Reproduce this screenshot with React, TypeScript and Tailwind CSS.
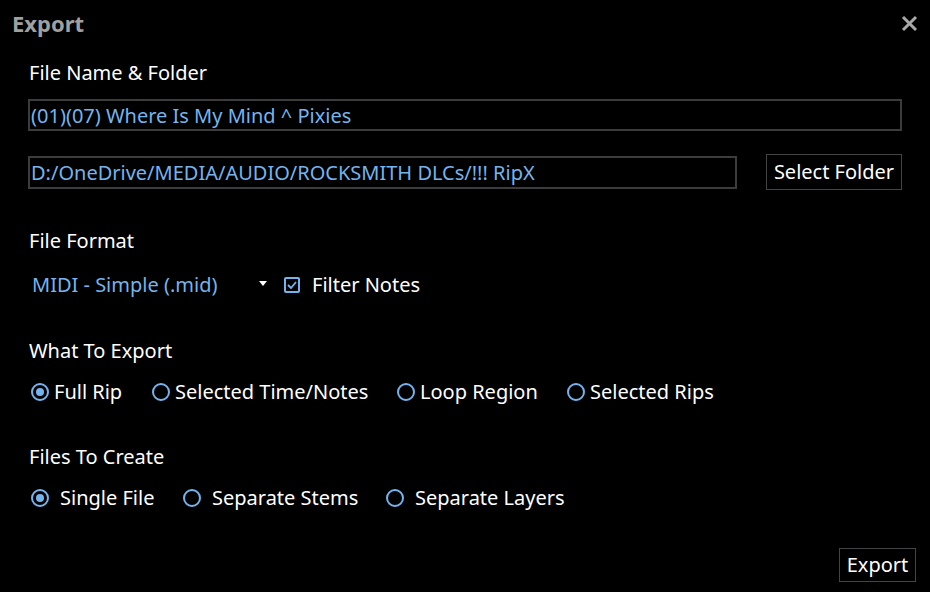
import { useState } from 'react';

const font = { fontFamily: '"Noto Sans", "Open Sans", sans-serif' };

const Radio = ({ checked, label, gap, width, onClick }: { checked: boolean; label: string; gap: string; width?: string; onClick: () => void }) => (
  <button onClick={onClick} className={`flex items-center ${gap} ${width ?? ''} text-left text-white`}>
    <span className="flex h-[18px] w-[18px] shrink-0 items-center justify-center rounded-full border-2 border-[#74b4ee]">
      {checked && <span className="h-[8px] w-[8px] rounded-full bg-[#74b4ee]" />}
    </span>
    <span>{label}</span>
  </button>
);

export default function App() {
  const [what, setWhat] = useState('Full Rip');
  const [files, setFiles] = useState('Single File');
  const [filter, setFilter] = useState(true);

  const whatItems = [
    { label: 'Full Rip', w: 'w-[121px]' },
    { label: 'Selected Time/Notes', w: 'w-[245px]' },
    { label: 'Loop Region', w: 'w-[170px]' },
    { label: 'Selected Rips', w: '' },
  ];
  const fileItems = [
    { label: 'Single File', w: 'w-[152px]' },
    { label: 'Separate Stems', w: 'w-[203px]' },
    { label: 'Separate Layers', w: '' },
  ];

  return (
    <div style={font} className="flex h-[592px] w-[930px] flex-col bg-black text-[20px] leading-[28px] text-white">
      <div className="flex h-[37px] items-end justify-between pl-[12px] pr-[12px]">
        <span className="text-[22px] font-bold leading-[28px] text-[#a0a0a0]">Export</span>
        <span className="mb-[5px] text-[#a8a8a8]">
          <svg width="17" height="17" viewBox="0 0 17 17" stroke="currentColor" strokeWidth="3" strokeLinecap="butt">
            <path d="M2 2L15 15M15 2L2 15" />
          </svg>
        </span>
      </div>

      <div className="flex flex-col px-[28px]">
        <div className="mt-[22px] pl-[1px]">File Name &amp; Folder</div>
        <div className="mt-[12px] flex h-[32px] items-center border-2 border-[#3c3c3c] pl-[1px] pt-[2px] text-[#74b4ee]">
          (01)(07) Where Is My Mind ^ Pixies
        </div>

        <div className="mt-[23px] flex h-[36px] items-center justify-between">
          <div className="flex h-[33px] w-[709px] items-center border-2 border-[#3c3c3c] pl-[1px] pt-[1px] text-[#74b4ee]">
            D:/OneDrive/MEDIA/AUDIO/ROCKSMITH DLCs/!!! RipX
          </div>
          <button className="flex h-[36px] w-[136px] items-center justify-center border border-[#444444] text-white">
            Select Folder
          </button>
        </div>

        <div className="mt-[37px] pl-[1px]">File Format</div>
        <div className="mt-[16px] flex h-[28px] items-center">
          <div className="flex w-[239px] items-center justify-between pl-[4px] text-[#74b4ee]">
            <span>MIDI - Simple (.mid)</span>
            <svg width="8" height="5" viewBox="0 0 8 5" className="mb-[3px]">
              <path d="M0 0H8L4 5Z" fill="#ffffff" />
            </svg>
          </div>
          <button onClick={() => setFilter(!filter)} className="ml-[17px] flex items-center gap-[12px]">
            <span className="flex h-[16px] w-[16px] items-center justify-center rounded-[2px] border-2 border-[#74b4ee]">
              {filter && (
                <svg width="10" height="8" viewBox="0 0 10 8" fill="none" stroke="#74b4ee" strokeWidth="1.8">
                  <path d="M1 4L4 7L9 1" />
                </svg>
              )}
            </span>
            <span className="text-white">Filter Notes</span>
          </button>
        </div>

        <div className="mt-[38px] pl-[1px]">What To Export</div>
        <div className="mt-[13px] flex h-[28px] items-center pl-[3px]">
          {whatItems.map((it) => (
            <Radio key={it.label} label={it.label} gap="gap-[5px]" width={it.w} checked={what === it.label} onClick={() => setWhat(it.label)} />
          ))}
        </div>

        <div className="mt-[37px] pl-[1px]">Files To Create</div>
        <div className="mt-[13px] flex h-[28px] items-center pl-[3px]">
          {fileItems.map((it) => (
            <Radio key={it.label} label={it.label} gap="gap-[11px]" width={it.w} checked={files === it.label} onClick={() => setFiles(it.label)} />
          ))}
        </div>
      </div>

      <div className="mt-[36px] flex justify-end pr-[14px]">
        <button className="flex h-[34px] w-[77px] items-center justify-center border border-[#444444] text-white">Export</button>
      </div>
    </div>
  );
}
